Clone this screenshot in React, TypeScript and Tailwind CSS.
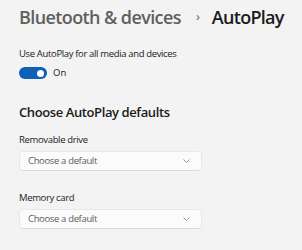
import React from "react";

const Dropdown = () => (
  <div className="flex items-center justify-between w-[183px] h-[20px] bg-[#fbfbfb] border border-[#e8e8e8] border-b-[#dcdcdc] rounded-[4px] pl-[8px] pr-[11px]">
    <span className="text-[9.5px] text-[#5c5c5c] tracking-[-0.35px]">Choose a default</span>
    <svg width="7" height="4" viewBox="0 0 7 4" fill="none">
      <path d="M0.5 0.5l3 3 3-3" stroke="#8a8a8a" strokeWidth="0.9" />
    </svg>
  </div>
);

const App = () => {
  return (
    <div
      className="w-[302px] h-[250px] bg-[#f3f3f3] pl-[19px] pt-[3px] overflow-hidden text-[#1b1b1b]"
      style={{ fontFamily: '"Open Sans", sans-serif' }}
    >
      <div className="flex items-center h-[28px] whitespace-nowrap">
        <span className="text-[18px] font-semibold text-[#5f5f5f] tracking-[-0.6px]">Bluetooth &amp; devices</span>
        <span className="text-[13px] text-[#5f5f5f] ml-[15px] mr-[12px]">›</span>
        <span className="text-[18px] font-semibold text-[#1a1a1a] tracking-[-0.7px]">AutoPlay</span>
      </div>
      <div className="mt-[17px] h-[12px] leading-[12px] text-[9.5px] tracking-[-0.35px]">Use AutoPlay for all media and devices</div>
      <div className="flex items-center mt-[7px] h-[12px] gap-[6px]">
        <div className="w-[28px] h-[12px] rounded-full bg-[#0f5fb6] flex items-center justify-end pr-[3px]">
          <div className="w-[7px] h-[7px] rounded-full bg-white" />
        </div>
        <span className="text-[9.5px]">On</span>
      </div>
      <div className="mt-[24px] h-[18px] leading-[18px] text-[13px] font-semibold tracking-[-0.4px]">Choose AutoPlay defaults</div>
      <div className="mt-[13px] h-[12px] leading-[12px] text-[9.5px] tracking-[-0.35px]">Removable drive</div>
      <div className="mt-[5px]"><Dropdown /></div>
      <div className="mt-[21px] h-[12px] leading-[12px] text-[9.5px] tracking-[-0.35px]">Memory card</div>
      <div className="mt-[5px]"><Dropdown /></div>
    </div>
  );
};

export default App;
